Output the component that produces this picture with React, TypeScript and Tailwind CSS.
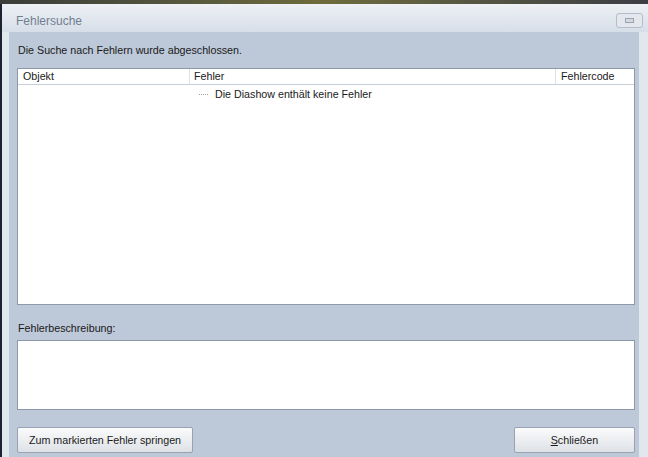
import React from 'react'

const font = { fontFamily: '"Liberation Sans", Arial, sans-serif' }

function WindowButton() {
  return (
    <div className="mt-[9px] mr-[5px] flex h-[15px] w-[27px] items-center justify-center rounded-[3px] border border-[#b4bcc8] bg-[#e4e8ee]">
      <div className="h-[5px] w-[9px] border border-[#9aa3b0] bg-[#d4d9e0]" />
    </div>
  )
}

function Button({ children, className = '' }: { children: React.ReactNode; className?: string }) {
  return (
    <button
      className={`flex h-[26px] items-center justify-center rounded-[2px] border border-[#98a2b0] bg-gradient-to-b from-[#fbfbfc] to-[#dde1e6] text-[10.7px] text-[#1a1a1a] ${className}`}
    >
      {children}
    </button>
  )
}

export default function App() {
  return (
    <div className="flex h-[457px] w-[648px] flex-col overflow-hidden bg-[#1c2230]" style={font}>
      {/* strip of the desktop behind the dialog */}
      <div className="h-[4px] bg-gradient-to-r from-[#3a3d3a] via-[#6e6c3c] to-[#3c3e44]" />

      <div className="ml-[2px] flex flex-1 flex-col bg-[#e2e7ee]">
        {/* title bar */}
        <div className="flex h-[28px] items-start justify-between bg-gradient-to-b from-[#eef1f5] to-[#d6dee8]">
          <span className="mt-[8px] ml-[14px] text-[12px] text-[#717e90]">Fehlersuche</span>
          <WindowButton />
        </div>

        {/* dialog body */}
        <div className="ml-[7px] mr-[9px] flex flex-1 flex-col bg-[#bdc8d8] pl-[8px] pr-[4px] text-[10.7px] text-[#1a1a1a]">
          <div className="flex h-[36px] items-center pl-[1px]">
            Die Suche nach Fehlern wurde abgeschlossen.
          </div>

          <div className="flex h-[237px] flex-col border border-[#8d98a8] bg-white">
            <div className="flex h-[16px] border-b border-[#c9cfd8]">
              <div className="w-[172px] border-r border-[#dfe3e9] pl-[5px] leading-[15px]">Objekt</div>
              <div className="w-[366px] border-r border-[#dfe3e9] pl-[4px] leading-[15px]">Fehler</div>
              <div className="flex-1 pl-[5px] leading-[15px]">Fehlercode</div>
            </div>
            <div className="flex h-[18px] items-center pl-[181px]">
              <span className="mr-[7px] w-[9px] border-t border-dotted border-[#9aa0a8]" />
              Die Diashow enthält keine Fehler
            </div>
          </div>

          <div className="flex h-[35px] items-end pb-[4px] pl-[1px]">Fehlerbeschreibung:</div>

          <div className="h-[70px] border border-[#8d98a8] bg-white" />

          <div className="mt-[17px] flex justify-between">
            <Button className="w-[176px]">Zum markierten Fehler springen</Button>
            <Button className="w-[121px]">
              <span className="underline">S</span>chließen
            </Button>
          </div>
        </div>
      </div>
    </div>
  )
}
